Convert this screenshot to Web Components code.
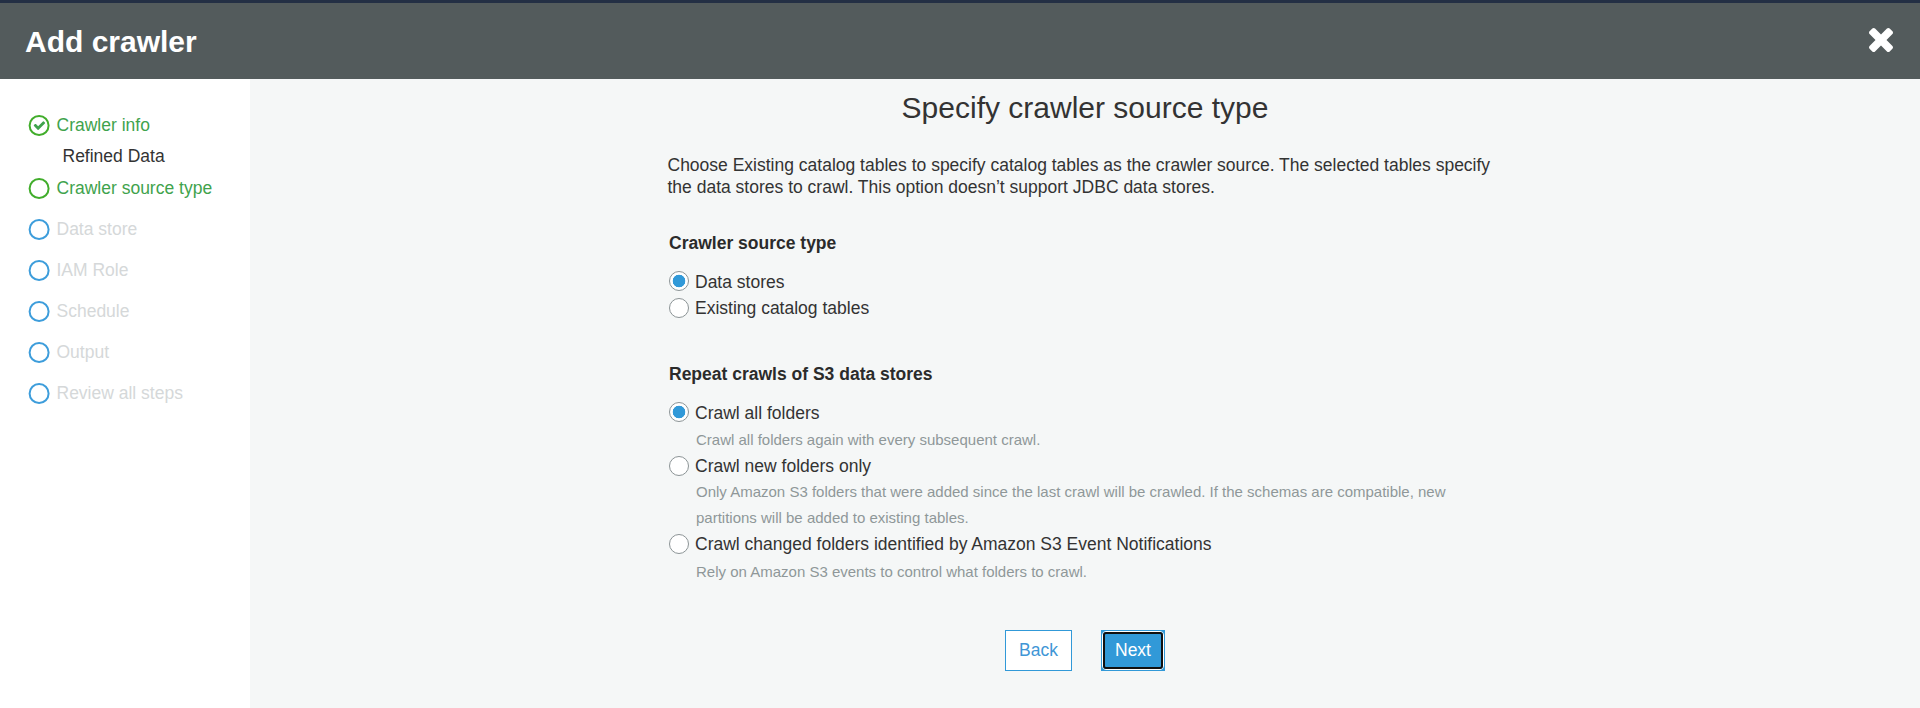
<!DOCTYPE html>
<html lang="en">
<head>
<meta charset="utf-8">
<title>Add crawler</title>
<style>
html,body{margin:0;height:100%}
body{font-family:"Liberation Sans",Arial,sans-serif;font-size:17.5px;line-height:22px;color:#333;background:#f5f7f7;overflow:hidden}
</style>
</head>
<body>
<crawler-wizard></crawler-wizard>
<script>
function define(name, html) {
  const tpl = document.createElement('template');
  tpl.innerHTML = html;
  customElements.define(name, class extends HTMLElement {
    constructor() {
      super();
      this.attachShadow({ mode: 'open' }).append(tpl.content.cloneNode(true));
    }
  });
}

define('wizard-header', `
<style>
:host{display:flex;box-sizing:border-box;height:79px;border-top:3px solid #232f44;background:#535b5c;color:#fff;padding:0 27px 0 25px;justify-content:space-between;align-items:flex-start}
h1{margin:22px 0 0;font-size:30px;line-height:33px;font-weight:700}
svg{display:block;margin-top:25px}
</style>
<h1><slot></slot></h1>
<svg width="24" height="24" viewBox="302 366 1188 1188"><path fill="#fff" d="M1490 1322q0 40-28 68l-136 136q-28 28-68 28t-68-28l-294-294-294 294q-28 28-68 28t-68-28l-136-136q-28-28-28-68t28-68l294-294-294-294q-28-28-28-68t28-68l136-136q28-28 68-28t68 28l294 294 294-294q28-28 68-28t68 28l136 136q28 28 28 68t-28 68l-294 294 294 294q28 28 28 68z"/></svg>`);

define('wizard-step', `
<style>
:host{display:flex;height:22px;margin-bottom:19px;color:#d5d8d9;--ring:#3d9ddb;white-space:nowrap}
:host([state=done]),:host([state=current]){color:#3fa34d;--ring:#41ad2b}
:host([state=done]){margin-bottom:9px}
svg{display:block;margin:1px 6.5px 0 28px;width:22px;height:21px;flex:none}
path{display:none}
:host([state=done]) path{display:block}
</style>
<svg viewBox="0 0 22 21"><circle cx="11.1" cy="10.5" r="9.5" fill="none" style="stroke:var(--ring)" stroke-width="2"/><path transform="translate(4.9 3.8) scale(.0073)" fill="#3fa34d" d="M1671 566q0 40-28 68l-724 724-136 136q-28 28-68 28t-68-28l-136-136-362-362q-28-28-28-68t28-68l136-136q28-28 68-28t68 28l294 295 656-657q28-28 68-28t68 28l136 136q28 28 28 68z"/></svg>
<slot></slot>`);

define('step-detail', `
<style>:host{display:block;margin:0 0 10px 62.5px;color:#333}</style><slot></slot>`);

define('wizard-nav', `
<style>:host{display:block;box-sizing:border-box;width:250px;padding-top:35px;background:#fff}</style><slot></slot>`);

define('radio-option', `
<style>
:host{display:block;margin-bottom:4px}
.row{display:flex;height:22px;gap:6px;white-space:nowrap}
i{display:block;box-sizing:border-box;width:20px;height:20px;margin-top:var(--drop,1px);border:1px solid #8c9496;border-radius:50%;background:#fff;flex:none}
:host([checked]) i{background:radial-gradient(circle,#3199d8 6px,#fff 6.6px)}
:host([checked]){--drop:0px}
.hint{display:block;font-size:15px;line-height:26px;color:#8f9799;padding-left:27px}
::slotted([slot=hint]){display:block;padding-top:var(--hint-gap,3px);padding-bottom:2px;margin-bottom:-4px}
</style>
<div class="row"><i></i><span><slot></slot></span></div>
<div class="hint"><slot name="hint"></slot></div>`);

define('option-group', `
<style>
:host{display:block;margin-left:1.5px}
h3{margin:0 0 17px;font-size:17.5px;line-height:22px;font-weight:700;color:#2b2b2b}
</style>
<h3><slot name="title"></slot></h3><slot></slot>`);

define('wizard-button', `
<style>
:host{display:block}
button{display:block;box-sizing:border-box;height:41px;padding:0 0 1px;width:67px;border:1px solid #3199d8;border-radius:0;background:#fff;color:#3f96d6;font:17.5px/22px "Liberation Sans",Arial,sans-serif}
b{font-weight:400}
:host([primary]) button{width:64px;color:#fff;background:#3199d8;padding:0}
:host([primary]) span{display:flex;box-sizing:border-box;width:62px;height:39px;border-radius:4px;border:1px solid #fff;align-items:center;justify-content:center}
:host([primary]) b{box-sizing:border-box;width:60px;height:37px;border:2px solid #101010;border-radius:3px;line-height:32px}
</style>
<button><span><b><slot></slot></b></span></button>`);

define('crawler-form', `
<style>
:host{display:block;flex:1}
main{width:835px;margin:0 auto;padding-top:12px}
h2{margin:0 0 30px;text-align:center;font-size:30px;line-height:33px;font-weight:400}
p{margin:0 0 34px;white-space:nowrap}
option-group + option-group{margin-top:44px}
.actions{display:flex;justify-content:center;gap:29px;margin-top:47px}
</style>
<main>
<h2>Specify crawler source type</h2>
<p>Choose Existing catalog tables to specify catalog tables as the crawler source. The selected tables specify<br>the data stores to crawl. This option doesn’t support JDBC data stores.</p>
<option-group>
<span slot="title">Crawler source type</span>
<radio-option checked>Data stores</radio-option>
<radio-option>Existing catalog tables</radio-option>
</option-group>
<option-group>
<span slot="title">Repeat crawls of S3 data stores</span>
<radio-option checked>Crawl all folders<span slot="hint">Crawl all folders again with every subsequent crawl.</span></radio-option>
<radio-option style="--hint-gap:2px">Crawl new folders only<span slot="hint">Only Amazon S3 folders that were added since the last crawl will be crawled. If the schemas are compatible, new<br>partitions will be added to existing tables.</span></radio-option>
<radio-option style="--hint-gap:4px">Crawl changed folders identified by Amazon S3 Event Notifications<span slot="hint">Rely on Amazon S3 events to control what folders to crawl.</span></radio-option>
</option-group>
<div class="actions"><wizard-button>Back</wizard-button><wizard-button primary>Next</wizard-button></div>
</main>`);

define('crawler-wizard', `
<style>
:host{display:flex;flex-direction:column;height:100vh}
.body{display:flex;flex:1}
</style>
<wizard-header>Add crawler</wizard-header>
<div class="body">
<wizard-nav>
<wizard-step state="done">Crawler info</wizard-step>
<step-detail>Refined Data</step-detail>
<wizard-step state="current">Crawler source type</wizard-step>
<wizard-step>Data store</wizard-step>
<wizard-step>IAM Role</wizard-step>
<wizard-step>Schedule</wizard-step>
<wizard-step>Output</wizard-step>
<wizard-step>Review all steps</wizard-step>
</wizard-nav>
<crawler-form></crawler-form>
</div>`);
</script>
</body>
</html>
